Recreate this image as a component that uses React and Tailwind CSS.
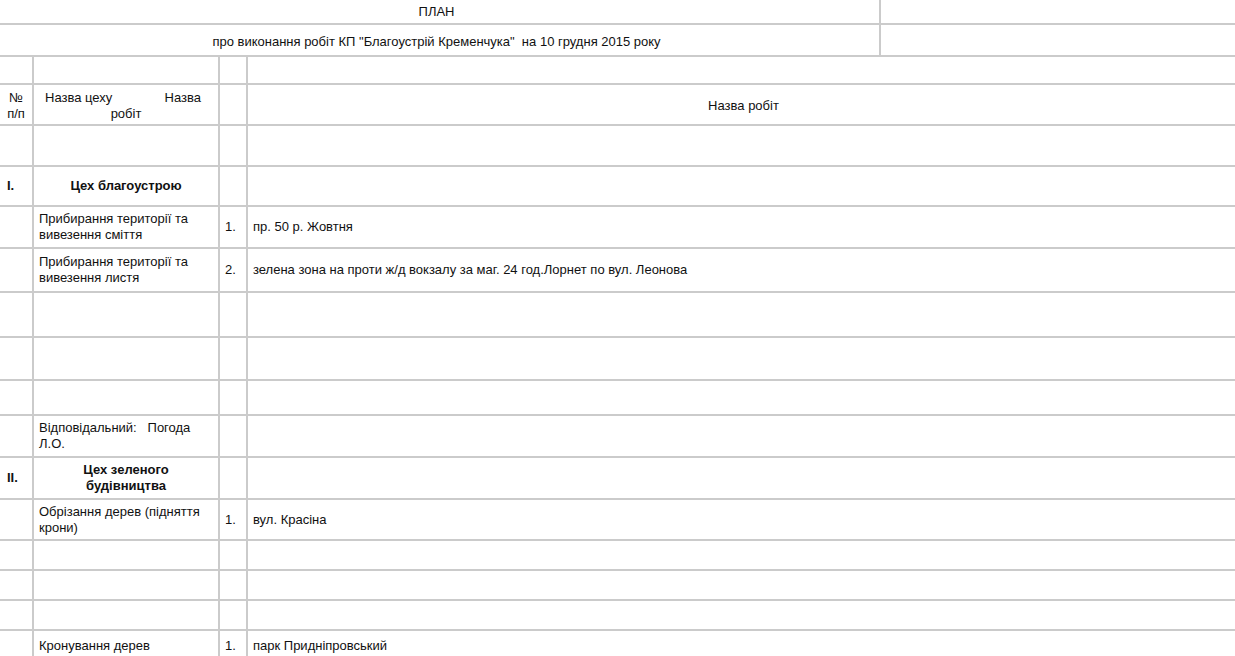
import React from "react";

// spreadsheet-like plan of works
const line = "border-[#cbcbcb]";

const rows = [
  { h: "h-[41px]", num: "", name: "", idx: "", work: "" },
  { h: "h-[40px]", num: "I.", name: "Цех благоустрою", section: true },
  {
    h: "h-[42px]",
    name: "Прибирання території та\nвивезення сміття",
    idx: "1.",
    work: "пр. 50 р. Жовтня",
  },
  {
    h: "h-[44px]",
    name: "Прибирання території та\nвивезення листя",
    idx: "2.",
    work: "зелена зона на проти ж/д вокзалу за маг. 24 год.Лорнет по вул. Леонова",
  },
  { h: "h-[45px]" },
  { h: "h-[43px]" },
  { h: "h-[35px]" },
  { h: "h-[42px]", name: "Відповідальний:   Погода\nЛ.О." },
  { h: "h-[42px]", num: "II.", name: "Цех зеленого\nбудівництва", section: true },
  { h: "h-[41px]", name: "Обрізання дерев (підняття\nкрони)", idx: "1.", work: "вул. Красіна" },
  { h: "h-[30px]" },
  { h: "h-[30px]" },
  { h: "h-[30px]" },
  { h: "h-[32px]", name: "Кронування дерев", idx: "1.", work: "парк Придніпровський" },
];

const Row = ({ h, children }) => (
  <div className={`grid grid-cols-[34px_186px_28px_1fr] border-b-2 ${line} ${h}`}>
    {children}
  </div>
);

const Cell = ({ className = "", children }) => (
  <div className={`flex items-center border-r-2 ${line} px-[5px] ${className}`}>{children}</div>
);

export default function App() {
  return (
    <div
      className="w-[1235px] h-[656px] overflow-hidden bg-white text-[13px] leading-4 text-[#111]"
      style={{ fontFamily: '"Liberation Sans", Arial, sans-serif' }}
    >
      <div className={`flex h-[25px] border-b-2 ${line}`}>
        <div className={`w-[881px] border-r-2 ${line} flex items-center justify-center pr-[6px]`}>ПЛАН</div>
        <div className="flex-1" />
      </div>
      <div className={`flex h-[32px] border-b-2 ${line}`}>
        <div
          className={`w-[881px] border-r-2 ${line} flex items-center justify-center whitespace-pre pt-[3px] pr-[6px]`}
        >
          {'про виконання робіт КП "Благоустрій Кременчука"  на 10 грудня 2015 року'}
        </div>
        <div className="flex-1" />
      </div>

      <Row h="h-[28px]">
        <Cell />
        <Cell />
        <Cell />
        <div />
      </Row>

      <Row h="h-[41px]">
        <Cell className="justify-center text-center pt-[2px]">
          №
          <br />
          п/п
        </Cell>
        <Cell className="flex-col justify-center pt-[2px]">
          <div className="flex w-full justify-between pl-[6px] pr-[12px]">
            <span>Назва цеху</span>
            <span>Назва</span>
          </div>
          <div className="text-center">робіт</div>
        </Cell>
        <Cell />
        <div className="flex items-center justify-center pl-[4px] pt-[2px]">Назва робіт</div>
      </Row>

      {rows.map((r, i) => (
        <Row key={i} h={r.h}>
          <Cell className="font-bold pl-[7px]">{r.num}</Cell>
          <Cell
            className={
              r.section ? "justify-center text-center font-bold whitespace-pre-line" : "whitespace-pre"
            }
          >
            {r.name}
          </Cell>
          <Cell>{r.idx}</Cell>
          <div className="flex items-center px-[5px]">{r.work}</div>
        </Row>
      ))}
    </div>
  );
}
